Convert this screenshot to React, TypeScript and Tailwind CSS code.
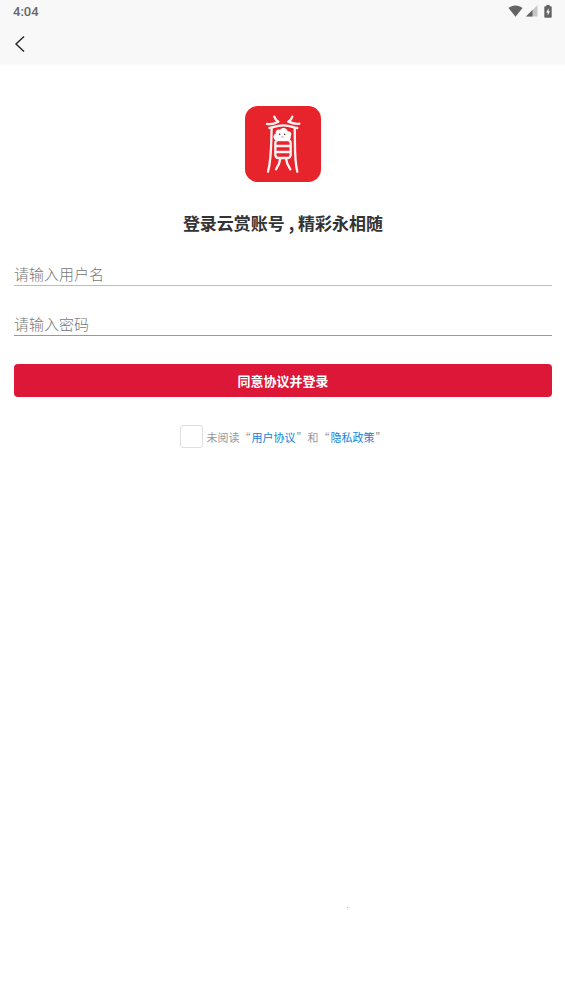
import { useState } from "react";
import type { FormEvent } from "react";

function StatusBar() {
  return (
    <div className="flex h-6 items-center justify-between px-[13px]">
      <span className="font-[Roboto] text-[13px] font-medium leading-6 text-[#686868]">4:04</span>
      <div className="flex items-center pb-0.5 text-[#636363]">
        {/* wifi */}
        <svg width="15" height="12" viewBox="0 0 15 12" fill="currentColor">
          <path d="M7.5 11.7 0.5 3C2.4 1.2 4.9 0.4 7.5 0.4s5.1.8 7 2.6z" />
        </svg>
        {/* signal */}
        <svg width="13" height="12" viewBox="0 0 13 12" className="ml-0.5">
          <path d="M12.5 0v11.5H1z" fill="#c6c6c6" />
          <path d="M7.5 5v6.5H1z" fill="currentColor" />
        </svg>
        {/* battery */}
        <svg width="8" height="13" viewBox="0 0 8 13" className="ml-1.5">
          <path
            d="M2.4 0h3.2v1.2h1.1c.6 0 1 .4 1 1v9.6c0 .6-.4 1-1 1H1.3c-.6 0-1-.4-1-1V2.2c0-.6.4-1 1-1h1.1z"
            fill="currentColor"
          />
          <path d="M4.6 3.2 2.2 7.5h1.5v3.1l2.3-4.4H4.6z" fill="#f8f8f8" />
        </svg>
      </div>
    </div>
  );
}

function Logo() {
  return (
    <svg width="76" height="76" viewBox="0 0 228 228" role="img" aria-label="云赏">
      <rect width="228" height="228" rx="38" fill="#e7232b" />
      <g fill="none" stroke="#fff2f2" strokeWidth="7" strokeLinecap="round" strokeLinejoin="round">
        {/* top strokes */}
        <path d="M88 32c2 7 6 11 11 15" />
        <path d="M142 32c-2 7-6 11-11 15" />
        <path d="M66 54c12 2 23-1 34-7" />
        <path d="M163 53c-11 2-22-1-33-6" />
        {/* outer frame */}
        <path d="M73 66c10-1 20-8 42-8s31 7 42 8" />
        <path d="M80 66c-2 46 0 92-11 131" />
        <path d="M149 66c2 46-2 92 8 131" />
        {/* inner box and legs */}
        <rect x="91" y="102" width="46" height="54" rx="9" />
        <path d="M92 120h44M92 138h44" />
        <path d="M106 157c-1 12-6 23-13 33" />
        <path d="M123 157c1 12 6 23 13 33" />
      </g>
      {/* cloud face */}
      <path
        d="M96 103c-12 0-14-17-4-20-2-9 7-15 13-11 6-10 22-6 23 4 10-1 14 9 9 15 2 9-6 14-13 12z"
        fill="#fff"
      />
      <circle cx="104" cy="85" r="2.500" fill="#493235" />
      <circle cx="119" cy="85" r="2.500" fill="#493235" />
      <path d="M108 94c2-2 6-2 8 0" fill="none" stroke="#8a7478" strokeWidth="2" />
    </svg>
  );
}

const fieldClass =
  "block h-[26px] w-full border-b bg-transparent pt-0.5 text-[15px] font-light leading-[22px] text-[#333] outline-none placeholder:text-[#777]";

export default function App() {
  const [username, setUsername] = useState("");
  const [password, setPassword] = useState("");
  const [agreed, setAgreed] = useState(false);

  const handleSubmit = (e: FormEvent) => {
    e.preventDefault();
  };

  return (
    <div className="flex min-h-screen flex-col bg-white font-['Noto_Sans_CJK_SC',sans-serif]">
      <header className="bg-[#f8f8f8] shadow-[0_1px_2px_#f8f8f8]">
        <StatusBar />
        <div className="flex h-10 items-center px-3">
          <button type="button" aria-label="返回" className="flex h-8 w-4 items-center justify-center">
            <svg width="10" height="16" viewBox="0 0 10 16" fill="none" stroke="#222" strokeWidth="1.400">
              <path d="M9 .5 1 8l8 7.5" />
            </svg>
          </button>
        </div>
      </header>

      <main className="flex flex-col pl-[14px] pr-[13px] pt-[42px]">
        <div className="flex justify-center">
          <Logo />
        </div>
        <h1 className="mt-7 text-center text-[17px] font-bold leading-[26px] text-[#333]">
          登录云赏账号 , 精彩永相随
        </h1>

        <form onSubmit={handleSubmit} className="mt-6">
          <input
            type="text"
            aria-label="用户名"
            placeholder="请输入用户名"
            value={username}
            onChange={(e) => setUsername(e.target.value)}
            className={`${fieldClass} border-[#bcbcbc]`}
          />
          <input
            type="password"
            aria-label="密码"
            placeholder="请输入密码"
            value={password}
            onChange={(e) => setPassword(e.target.value)}
            className={`${fieldClass} mt-6 border-[#999]`}
          />
          <button
            type="submit"
            className="mt-7 flex h-[33px] w-full items-center justify-center rounded bg-[#dd1738] text-[13px] font-bold text-white"
          >
            同意协议并登录
          </button>

          <div className="mt-7 flex items-center justify-center gap-1">
            <input
              id="agree"
              type="checkbox"
              checked={agreed}
              onChange={(e) => setAgreed(e.target.checked)}
              className="size-[23px] appearance-none rounded-[3px] border border-[#dedede] bg-white checked:bg-[#dd1738]"
            />
            <label htmlFor="agree" className="text-[11px] leading-4 text-[#999]">
              未阅读“
              <a href="#terms" className="mx-px text-[#1481d8]">用户协议</a>
              ”和“
              <a href="#privacy" className="mx-px text-[#1481d8]">隐私政策</a>”
            </label>
          </div>
        </form>
      </main>

      {/* tiny marker near the bottom */}
      <div className="mt-auto flex justify-center pb-24 pl-[130px]">
        <span className="size-px bg-[#d8c62c]" />
      </div>
    </div>
  );
}
